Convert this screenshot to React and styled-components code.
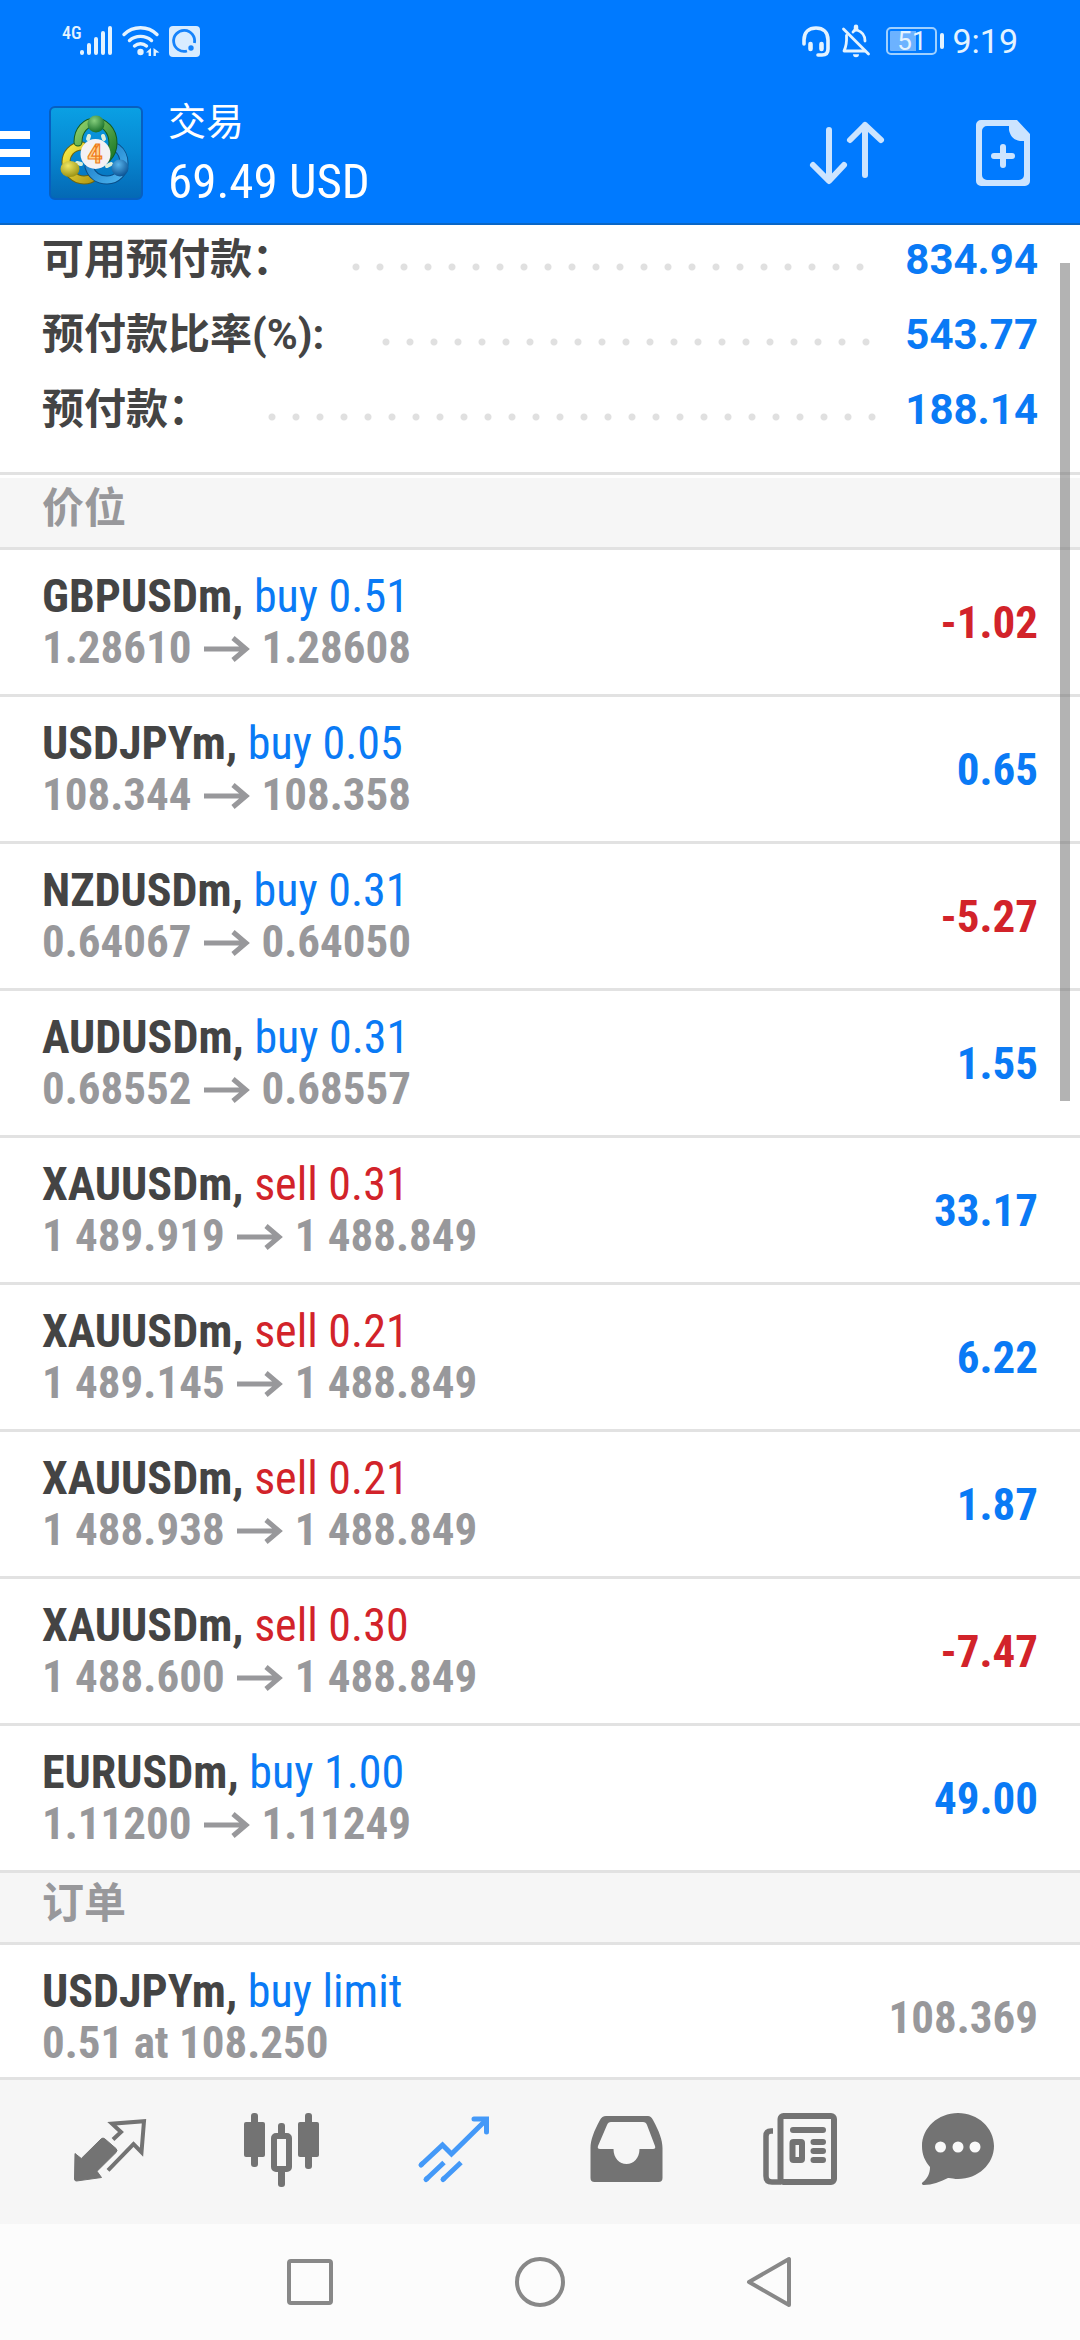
import React from 'react';
import styled, { createGlobalStyle } from 'styled-components';

const GlobalStyle = createGlobalStyle`
    *, *::before, *::after {
        box-sizing: border-box;
    }

    body {
        margin: 0;
        background: #fff;
        color: #444;
        font-family: Roboto, "Noto Sans CJK SC", sans-serif;
    }

    button {
        display: flex;
        align-items: center;
        justify-content: center;
        padding: 0;
        border: 0;
        background: none;
        color: inherit;
        cursor: pointer;
    }

    svg {
        display: block;
        flex: none;
        overflow: visible;
    }
`;

const condensed = '"Roboto Condensed", "Liberation Sans Narrow", Roboto, "Noto Sans CJK SC", sans-serif';

const Screen = styled.div`
    display: flex;
    flex-direction: column;
    height: 100vh;
    overflow: hidden;
`;

const Header = styled.header`
    flex: none;
    background: #007aff;
    border-bottom: 2px solid #0a66c6;
    color: #fff;
`;

const StatusBar = styled.div`
    display: flex;
    align-items: center;
    justify-content: space-between;
    height: 82px;
    padding: 0 62px;
    color: #e4f3ff;
`;

const StatusGroup = styled.div`
    display: flex;
    align-items: center;
    gap: ${({ $gap }) => $gap}px;
`;

const Network = styled.span`
    align-self: flex-start;
    font-family: ${condensed};
    font-size: 18px;
    font-weight: 500;
    line-height: 16px;
`;

const Clock = styled.time`
    font-size: 34px;
    line-height: 40px;
`;

const Battery = styled.span`
    display: flex;
    align-items: center;
    gap: 3px;
    padding-left: 4px;

    &::after {
        content: '';
        width: 4px;
        height: 16px;
        border-radius: 2px;
        background: currentColor;
    }
`;

const BatteryLevel = styled.span`
    width: 51px;
    height: 28px;
    border: 2px solid #9fd0ff;
    border-radius: 5px;
    background: linear-gradient(90deg, #6cb2ff 60%, transparent 60%) content-box;
    padding: 2px;
    font-size: 26px;
    line-height: 20px;
    text-align: center;
`;

const AppBar = styled.div`
    display: flex;
    align-items: center;
    height: 141px;
    padding-right: 50px;
`;

const MenuButton = styled.button`
    width: 30px;
    height: 44px;
    margin-right: 19px;
`;

const Titles = styled.div`
    flex: 1;
    padding: 6px 0 0 25px;
`;

const Title = styled.h1`
    margin: 0;
    font-size: 38px;
    font-weight: 400;
    line-height: 52px;
`;

const Balance = styled.p`
    margin: 0;
    font-family: ${condensed};
    font-size: 49px;
    line-height: 68px;
`;

const Actions = styled.div`
    display: flex;
    align-items: center;
    gap: 92px;
    color: #cce4ff;
`;

const Content = styled.main`
    position: relative;
    flex: 1;
    min-height: 0;
    overflow: hidden;
`;

const ScrollThumb = styled.div`
    position: absolute;
    top: 38px;
    right: 10px;
    width: 10px;
    height: 838px;
    background: rgba(110, 110, 110, 0.52);
`;

const Summary = styled.dl`
    display: flex;
    flex-direction: column;
    gap: 25px;
    margin: 0 0 3px;
    padding: 10px 42px 37px;
    border-bottom: 3px solid #e2e2e2;
`;

const SummaryRow = styled.div`
    display: flex;
    align-items: center;
    font-size: 42px;
    font-weight: 700;
    line-height: 50px;

    dd {
        margin: 0;
        color: #0a7af5;
    }
`;

const Leader = styled.span`
    flex: 1;
    height: 8px;
    margin: 14px 28px 0 58px;
    background: radial-gradient(circle at 4px 4px, #e0e0e0 3px, transparent 4px) 0 0 / 24px 8px repeat-x;
`;

const SectionTitle = styled.h2`
    height: 72px;
    margin: 0;
    padding: 0 42px;
    border-bottom: 3px solid #e2e2e2;
    background: #f6f6f6;
    color: #98989b;
    font-size: 42px;
    font-weight: 700;
    line-height: 62px;
`;

const List = styled.ul`
    margin: 0;
    padding: 0;
    list-style: none;
`;

const Row = styled.li`
    display: flex;
    align-items: center;
    justify-content: space-between;
    height: 147px;
    padding: 0 42px;
    border-bottom: 3px solid #e2e2e2;
    font-family: ${condensed};
    font-size: 45px;
    font-weight: 700;
    line-height: 51px;
`;

const Instrument = styled.div`
    font-size: 46px;
`;

const Side = styled.span`
    color: ${({ $sell }) => ($sell ? '#d2232a' : '#0a7af5')};
    font-weight: 400;
`;

const Prices = styled.div`
    display: flex;
    align-items: center;
    gap: 12px;
    color: #98989b;
`;

const Amount = styled.span`
    color: ${({ $tone }) => ({ up: '#0a7af5', down: '#d2232a', muted: '#98989b' })[$tone]};
`;

const TabBar = styled.nav`
    display: flex;
    flex: none;
    height: 147px;
    padding: 0 24px;
    border-top: 3px solid #e2e2e2;
    background: #f6f6f6;
`;

const Tab = styled.button`
    flex: 1;

    && {
        color: ${({ $active }) => ($active ? '#4499f8' : '#737373')};
    }
`;

const SystemBar = styled.nav`
    display: flex;
    flex: none;
    align-items: center;
    justify-content: center;
    gap: 180px;
    height: 116px;
    background: #fcfcfc;
    color: #888;
`;

const summary = [
    { label: '可用预付款：', value: '834.94' },
    { label: '预付款比率(%):', value: '543.77' },
    { label: '预付款：', value: '188.14' },
];

const positions = [
    { symbol: 'GBPUSDm', side: 'buy', lots: '0.51', open: '1.28610', now: '1.28608', profit: '-1.02' },
    { symbol: 'USDJPYm', side: 'buy', lots: '0.05', open: '108.344', now: '108.358', profit: '0.65' },
    { symbol: 'NZDUSDm', side: 'buy', lots: '0.31', open: '0.64067', now: '0.64050', profit: '-5.27' },
    { symbol: 'AUDUSDm', side: 'buy', lots: '0.31', open: '0.68552', now: '0.68557', profit: '1.55' },
    { symbol: 'XAUUSDm', side: 'sell', lots: '0.31', open: '1 489.919', now: '1 488.849', profit: '33.17' },
    { symbol: 'XAUUSDm', side: 'sell', lots: '0.21', open: '1 489.145', now: '1 488.849', profit: '6.22' },
    { symbol: 'XAUUSDm', side: 'sell', lots: '0.21', open: '1 488.938', now: '1 488.849', profit: '1.87' },
    { symbol: 'XAUUSDm', side: 'sell', lots: '0.30', open: '1 488.600', now: '1 488.849', profit: '-7.47' },
    { symbol: 'EURUSDm', side: 'buy', lots: '1.00', open: '1.11200', now: '1.11249', profit: '49.00' },
];

const SignalIcon = () => (
    <svg width="30" height="32" viewBox="3 0 30 32" stroke="currentColor" strokeWidth="4" strokeLinecap="round">
        <path d="M3 27v1M10 20v8M17 14v14M24 8v20M31 3v25" />
    </svg>
);

const WifiIcon = () => (
    <svg width="37" height="32" viewBox="0 0 37 32" fill="none" stroke="currentColor" strokeWidth="3.4" strokeLinecap="round">
        <path d="M2 9.500C11 .5 26 .5 35 9.500M7.500 15.500C13.500 10 23.500 10 29.500 15.500M12.500 21C16 18 21 18 24.500 21" />
        <circle cx="18.500" cy="27" r="3.200" fill="currentColor" stroke="none" />
        <path d="M29 23v8h-2.400v-3.500L24 27.500zM31.500 23l6 4.500-3.600.3V31h-2.400z" fill="currentColor" stroke="none" />
    </svg>
);

const BrowserIcon = () => (
    <svg width="31" height="31" viewBox="0 0 31 31">
        <rect width="31" height="31" rx="4" fill="#d8ecff" />
        <path d="M18 25A10.500 10.500 0 1 1 25.400 17" fill="none" stroke="#1583fb" strokeWidth="2.800" />
        <circle cx="22" cy="22" r="2.700" fill="#1583fb" />
    </svg>
);

const HeadsetIcon = () => (
    <svg width="28" height="31" viewBox="0 0 28 31" fill="none" stroke="currentColor" strokeLinecap="round">
        <path d="M2 18v-4C2 6 7 2 14 2s12 4 12 12v9c0 4-2 6-6 6h-4" strokeWidth="3.600" />
        <path d="M8.500 18v5M19.500 18v5" strokeWidth="4.600" />
    </svg>
);

const BellOffIcon = () => (
    <svg width="28" height="31" viewBox="0 0 28 31" fill="none" stroke="currentColor" strokeWidth="2.800" strokeLinecap="round" strokeLinejoin="round">
        <path d="M11 6c2-3 4-2 4-2 6 2 8 6 8 11M4.500 9.500C5 18 4 21 2 25h21" />
        <path d="M1.500 3l25 25" />
        <path d="M14 .8v2.500" strokeWidth="4.500" />
        <path d="M11 28.200h6a3 3 0 0 1-6 0z" fill="currentColor" stroke="none" />
    </svg>
);

const MenuIcon = () => (
    <svg width="30" height="44" viewBox="0 0 30 44" fill="#fff">
        <path d="M0 0h30v8H0zM0 18h30v8H0zM0 36h30v8H0z" />
    </svg>
);

const Logo = () => (
    <svg width="94" height="94" viewBox="0 0 94 94">
        <defs>
            <linearGradient id="tile" x1="0" y1="0" x2="0" y2="1">
                <stop offset="0" stopColor="#0aa0e4" />
                <stop offset="0.5" stopColor="#0788d2" />
                <stop offset="1" stopColor="#0468b4" />
            </linearGradient>
            <linearGradient id="green" x1="0" y1="0" x2="1" y2="1">
                <stop offset="0" stopColor="#8fd06a" />
                <stop offset="1" stopColor="#1d7a28" />
            </linearGradient>
            <linearGradient id="yellow" x1="0" y1="0" x2="1" y2="1">
                <stop offset="0" stopColor="#f8ea45" />
                <stop offset="1" stopColor="#b49a16" />
            </linearGradient>
            <linearGradient id="blue" x1="0" y1="0" x2="1" y2="1">
                <stop offset="0" stopColor="#1476c4" />
                <stop offset="1" stopColor="#4db4ee" />
            </linearGradient>
            <radialGradient id="greenHead" cx="0.4" cy="0.3" r="0.7">
                <stop offset="0" stopColor="#86cf7d" />
                <stop offset="1" stopColor="#19702a" />
            </radialGradient>
            <radialGradient id="yellowHead" cx="0.4" cy="0.3" r="0.7">
                <stop offset="0" stopColor="#efe764" />
                <stop offset="1" stopColor="#9c9416" />
            </radialGradient>
            <radialGradient id="blueHead" cx="0.4" cy="0.3" r="0.7">
                <stop offset="0" stopColor="#59b4ec" />
                <stop offset="1" stopColor="#0c5495" />
            </radialGradient>
        </defs>
        <rect x="1" y="1" width="92" height="92" rx="5" fill="url(#tile)" stroke="#075fc0" strokeWidth="2" />
        <g fill="none" strokeLinecap="round">
            <path d="M33 40c-10 0-16 8-16 16 0 10 9 18 18 18 4 0 7-1 9-3" stroke="#6d650f" strokeWidth="9" />
            <path d="M33 40c-10 0-16 8-16 16 0 10 9 18 18 18 4 0 7-1 9-3" stroke="url(#yellow)" strokeWidth="7" />
            <path d="M40 61c3 9 10 13 18 13 10 0 17-8 17-17 0-6-3-12-7-15" stroke="#094d88" strokeWidth="9" />
            <path d="M40 61c3 9 10 13 18 13 10 0 17-8 17-17 0-6-3-12-7-15" stroke="url(#blue)" strokeWidth="7" />
            <path d="M29 36c0-12 8-20 17-20s18 8 18 21c0 6-2 11-6 15" stroke="#145b20" strokeWidth="9" />
            <path d="M29 36c0-12 8-20 17-20s18 8 18 21c0 6-2 11-6 15" stroke="url(#green)" strokeWidth="7" />
            <path d="M40 30l-1 3M54 30l1 3M28 57l4 1M62 58l-4 2" stroke="#dcefdc" strokeWidth="4" />
        </g>
        <circle cx="47" cy="18" r="8.500" fill="url(#greenHead)" />
        <ellipse cx="21" cy="63" rx="9.500" ry="8" fill="url(#yellowHead)" />
        <circle cx="71" cy="62" r="8.500" fill="url(#blueHead)" />
        <circle cx="46.500" cy="48" r="15" fill="#f3f1f4" />
        <text x="46" y="57" fill="#ffd28c" stroke="#ef7d1a" strokeWidth="1.200" fontFamily="Roboto, sans-serif" fontSize="26" fontWeight="700" textAnchor="middle">4</text>
    </svg>
);

const SortIcon = () => (
    <svg width="74" height="64" viewBox="0 0 74 64" fill="none" stroke="currentColor" strokeWidth="6" strokeLinecap="round" strokeLinejoin="round">
        <path d="M19 9v50M3 44l16 16 15-16M55 54V4M40 19L55 4l16 15" />
    </svg>
);

const NewOrderIcon = () => (
    <svg width="54" height="66" viewBox="0 0 54 66" fill="currentColor">
        <path fillRule="evenodd" d="M5 0h36l13 14v47a5 5 0 0 1-5 5H5a5 5 0 0 1-5-5V5a5 5 0 0 1 5-5zM33 6H11a5 5 0 0 0-5 5v44a5 5 0 0 0 5 5h32a5 5 0 0 0 5-5V21h-4C37 20 34 15 33 10z" />
        <path d="M27 27v18M18 36h18" stroke="currentColor" strokeWidth="6" strokeLinecap="round" />
    </svg>
);

const PriceArrow = () => (
    <svg width="46" height="26" viewBox="0 0 46 26" fill="none" stroke="currentColor" strokeWidth="5">
        <path d="M0 14h42M29 3l13 11-13 11" />
    </svg>
);

const TabIcon = ({ children }) => (
    <svg width="96" height="96" viewBox="0 0 96 96" fill="currentColor">
        {children}
    </svg>
);

const QuotesIcon = () => (
    <TabIcon>
        <path d="M13 49.500l6.300 5L39 35q2-2 4 0l11 9.500q2 2 0 4L35 67.300l4.500 6.200-25 3.500q-2 0-2-2z" stroke="currentColor" strokeLinejoin="round" />
        <path d="M51 35.500l8-7.500-9-8.300L82 17.200l-2.500 31-8-8L46 66.300" fill="none" stroke="currentColor" strokeWidth="4" />
    </TabIcon>
);

const ChartIcon = () => (
    <TabIcon>
        <rect x="17" y="9" width="7" height="54" rx="3" />
        <rect x="10" y="18" width="21" height="35" rx="2" />
        <rect x="71" y="9" width="7" height="56" rx="3" />
        <rect x="64" y="18" width="21" height="35" rx="2" />
        <rect x="44" y="19" width="7" height="14" rx="3" />
        <rect x="44" y="62" width="7" height="21" rx="3" />
        <rect x="40" y="32" width="15" height="33" rx="2" fill="none" stroke="currentColor" strokeWidth="6" />
    </TabIcon>
);

const TradeIcon = () => (
    <TabIcon>
        <g fill="none" stroke="currentColor" strokeWidth="5">
            <path d="M15 61l21.500-20 9 9L80 16M20 75.500L38 58.500M37 75.500L55 58.500" />
            <path d="M15 61l1-1M20 75.500l1-1M37 75.500l1-1M68 15h12.500v13" strokeLinecap="round" />
        </g>
    </TabIcon>
);

const HistoryIcon = () => (
    <TabIcon>
        <path fillRule="evenodd" d="M28 12h42q3 0 5 4c6 11 9.500 20 9.500 28v30q0 4-4 4h-64q-4 0-4-4V44c0-8 3.500-17 9.500-28q2-4 6-4zM33 18q-3 0-4 3l-9 21q-1 3 2 3h13.500c0 9 6 15 13 15s13-6 13-15H75q3 0 2-3l-8-21q-1-3-4-3z" />
    </TabIcon>
);

const NewsIcon = () => (
    <TabIcon>
        <g fill="none" stroke="currentColor" strokeWidth="6">
            <rect x="30.500" y="12" width="53.500" height="66" rx="3" />
            <path d="M23 27h-2q-5 0-5 5v40q0 6 6 6h9" strokeWidth="5.500" />
            <rect x="42.500" y="38" width="9.500" height="18" rx="1" />
            <path d="M43 26h30M63.500 38H73M63.500 47H73M63.500 56H73" strokeLinecap="round" />
        </g>
    </TabIcon>
);

const MessagesIcon = () => (
    <TabIcon>
        <path d="M36 9c20 0 36 15 36 33S56 75 36 75c-4 0-8-1.500-10-1C18 78 10 81 2 81c-2 0-3-2-1-3 5-4 7-9 7-15C3 57 0 51 0 42 0 24 16 9 36 9z" />
        <g fill="#fafafa">
            <circle cx="18.500" cy="43" r="5.500" />
            <circle cx="36" cy="43" r="5.500" />
            <circle cx="53" cy="43" r="5.500" />
        </g>
    </TabIcon>
);

const tabs = [
    { label: '行情', Icon: QuotesIcon },
    { label: '图表', Icon: ChartIcon },
    { label: '交易', Icon: TradeIcon, active: true },
    { label: '历史', Icon: HistoryIcon },
    { label: '新闻', Icon: NewsIcon },
    { label: '信息', Icon: MessagesIcon },
];

const systemKeys = [
    { label: 'Recents', shape: <rect x="4" y="4" width="42" height="42" rx="2" /> },
    { label: 'Home', shape: <circle cx="25" cy="25" r="23" /> },
    { label: 'Back', shape: <path d="M4 25L44 2v46z" strokeLinejoin="round" /> },
];

const App = () => {
    return (
        <>
            <GlobalStyle />
            <Screen>
                <Header>
                    <StatusBar>
                        <StatusGroup $gap={10}>
                            <StatusGroup $gap={0}>
                                <Network>4G</Network>
                                <SignalIcon />
                            </StatusGroup>
                            <WifiIcon />
                            <BrowserIcon />
                        </StatusGroup>
                        <StatusGroup $gap={8}>
                            <StatusGroup $gap={12}>
                                <HeadsetIcon />
                                <BellOffIcon />
                                <Battery>
                                    <BatteryLevel>51</BatteryLevel>
                                </Battery>
                            </StatusGroup>
                            <Clock>9:19</Clock>
                        </StatusGroup>
                    </StatusBar>
                    <AppBar>
                        <MenuButton type="button" aria-label="菜单">
                            <MenuIcon />
                        </MenuButton>
                        <Logo />
                        <Titles>
                            <Title>交易</Title>
                            <Balance>69.49 USD</Balance>
                        </Titles>
                        <Actions>
                            <button type="button" aria-label="排序">
                                <SortIcon />
                            </button>
                            <button type="button" aria-label="新订单">
                                <NewOrderIcon />
                            </button>
                        </Actions>
                    </AppBar>
                </Header>

                <Content>
                    <Summary>
                        {summary.map(({ label, value }) => (
                            <SummaryRow key={label}>
                                <dt>{label}</dt>
                                <Leader />
                                <dd>{value}</dd>
                            </SummaryRow>
                        ))}
                    </Summary>

                    <SectionTitle>价位</SectionTitle>
                    <List>
                        {positions.map((p) => (
                            <Row key={p.symbol + p.open}>
                                <div>
                                    <Instrument>
                                        {p.symbol}, <Side $sell={p.side === 'sell'}>{p.side} {p.lots}</Side>
                                    </Instrument>
                                    <Prices>
                                        <span>{p.open}</span>
                                        <PriceArrow />
                                        <span>{p.now}</span>
                                    </Prices>
                                </div>
                                <Amount $tone={p.profit.startsWith('-') ? 'down' : 'up'}>{p.profit}</Amount>
                            </Row>
                        ))}
                    </List>

                    <SectionTitle>订单</SectionTitle>
                    <List>
                        <Row>
                            <div>
                                <Instrument>
                                    USDJPYm, <Side>buy limit</Side>
                                </Instrument>
                                <Prices>0.51 at 108.250</Prices>
                            </div>
                            <Amount $tone="muted">108.369</Amount>
                        </Row>
                    </List>
                    <ScrollThumb />
                </Content>

                <TabBar>
                    {tabs.map(({ label, Icon, active }) => (
                        <Tab key={label} type="button" aria-label={label} $active={active}>
                            <Icon />
                        </Tab>
                    ))}
                </TabBar>
                <SystemBar>
                    {systemKeys.map(({ label, shape }) => (
                        <button key={label} type="button" aria-label={label}>
                            <svg width="50" height="50" viewBox="0 0 50 50" fill="none" stroke="currentColor" strokeWidth="4">
                                {shape}
                            </svg>
                        </button>
                    ))}
                </SystemBar>
            </Screen>
        </>
    );
};

export default App;
